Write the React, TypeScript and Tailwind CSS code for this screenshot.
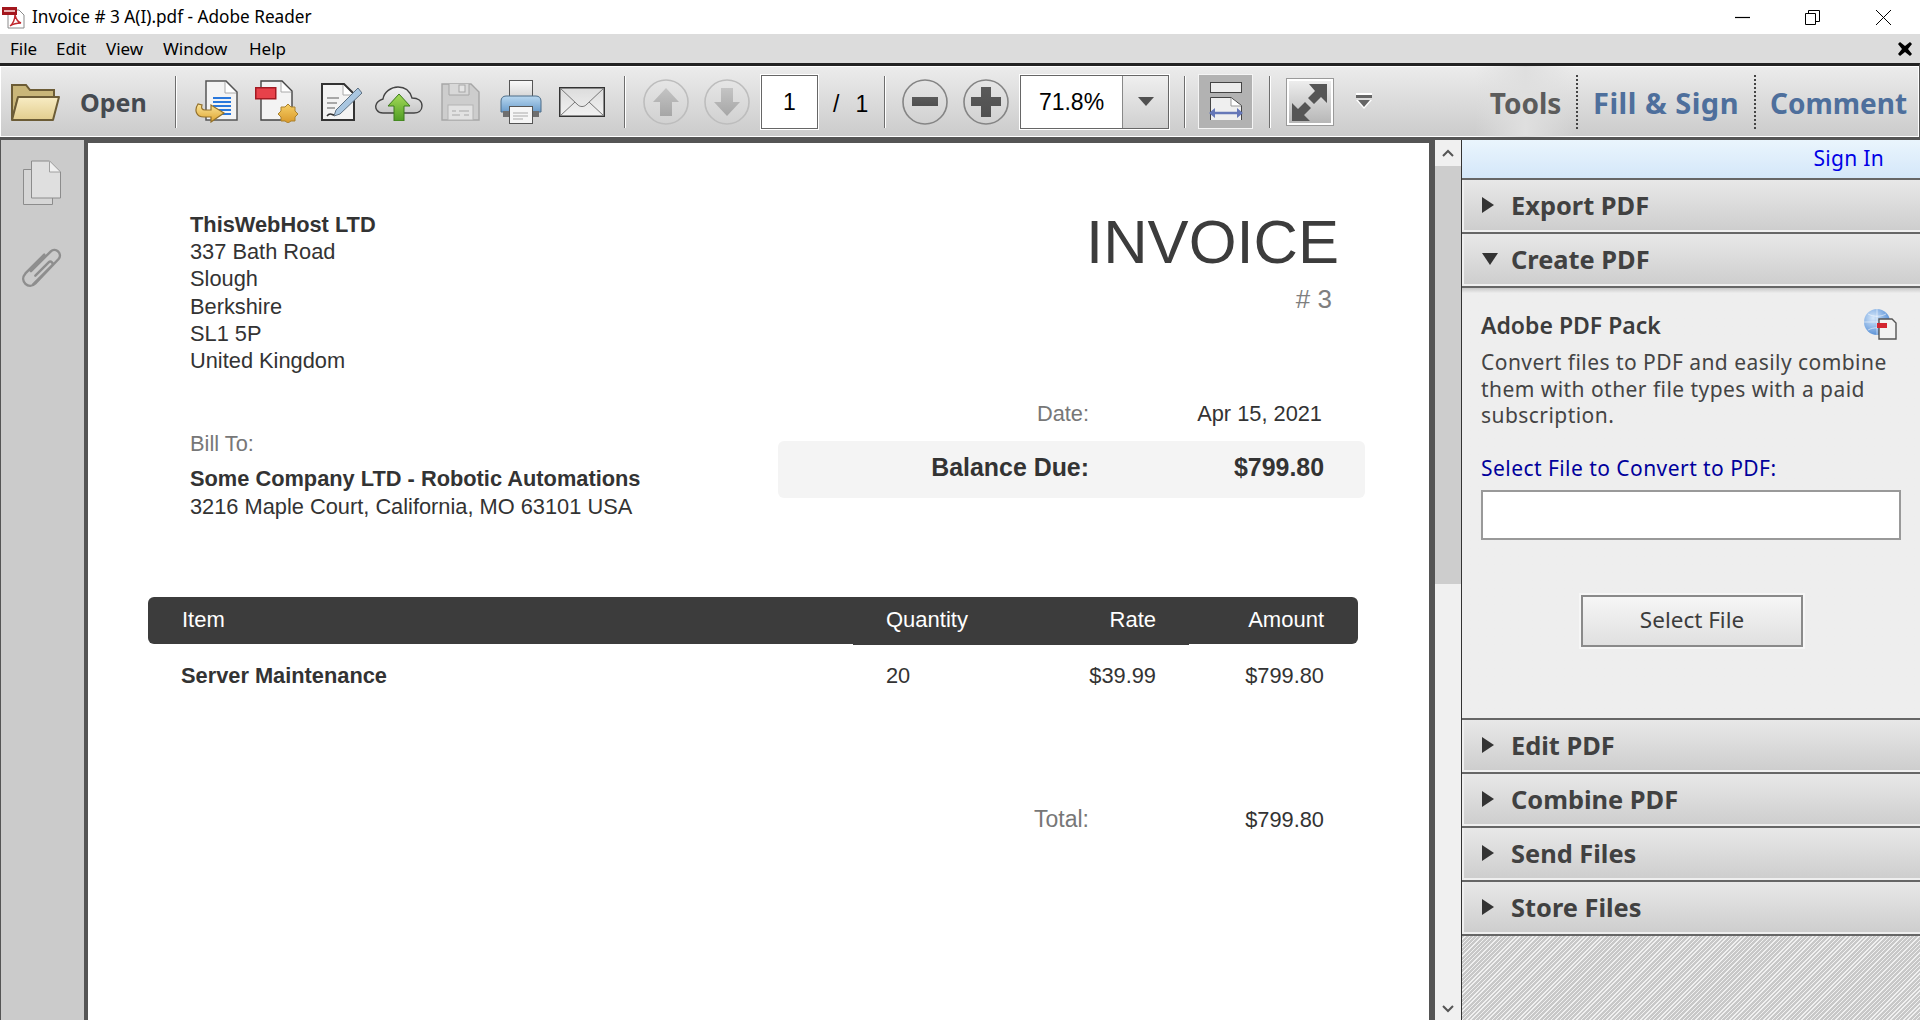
const sans = 'font-["Noto_Sans",sans-serif]'

function Sep() {
  return <div className="h-[52px] w-px shrink-0 bg-[#6e6e6e] shadow-[1px_0_0_#fff]" />
}

function PdfFileIcon() {
  return (
    <svg width="23" height="23" viewBox="0 0 23 23" className="ml-[2px] shrink-0">
      <path d="M6 4h11l5 5v13H6z" fill="#fff" stroke="#8a8a8a" />
      <path d="M8 20c3-2 5-7 5-11 1 4 3 7 6 8-4 0-8 1-11 3z" fill="none" stroke="#c0272d" strokeWidth="1.5" />
      <rect x="0" y="1" width="15" height="8" fill="#a3161d" />
      <rect x="2" y="4" width="11" height="2" fill="#e8b5b5" />
    </svg>
  )
}

function FolderIcon() {
  return (
    <svg width="50" height="40" viewBox="0 0 50 40" className="ml-[10px] shrink-0">
      <defs>
        <linearGradient id="fold" x1="0" y1="0" x2="0" y2="1">
          <stop offset="0" stopColor="#f8ecc4" />
          <stop offset="1" stopColor="#e2cd8e" />
        </linearGradient>
      </defs>
      <path d="M2 38V3h14l4 5h24v8H8z" fill="#c9b679" stroke="#6c5c36" strokeWidth="2" />
      <path d="M2 38l6-23h41l-6 23z" fill="url(#fold)" stroke="#6c5c36" strokeWidth="2" strokeLinejoin="round" />
    </svg>
  )
}

function ConvertIcon() {
  return (
    <svg width="44" height="43" viewBox="0 0 44 43" className="ml-[18px] shrink-0">
      <defs>
        <linearGradient id="arr" x1="0" y1="0" x2="0" y2="1">
          <stop offset="0" stopColor="#fbe59a" />
          <stop offset="1" stopColor="#dfa52f" />
        </linearGradient>
      </defs>
      <path d="M12 1h20l11 11v28H12z" fill="#f4f4f4" stroke="#555" strokeWidth="1.5" />
      <path d="M31 2v11h11" fill="#fff" stroke="#aaa" />
      <g fill="#2a78dc">
        <rect x="19" y="17" width="18" height="2" />
        <rect x="19" y="21" width="18" height="2" />
        <rect x="19" y="25" width="18" height="2" />
        <rect x="19" y="29" width="18" height="2" />
        <rect x="19" y="33" width="18" height="2" />
      </g>
      <path d="M4 24C0 30 2 37 10 37h7v5l13-9-13-8v5h-6c-3 0-4-2-3-5z" fill="url(#arr)" stroke="#93702a" strokeWidth="1.2" />
    </svg>
  )
}

function SealDocIcon() {
  return (
    <svg width="43" height="43" viewBox="0 0 43 43" className="ml-[17px] shrink-0">
      <defs>
        <linearGradient id="seal" x1="0" y1="0" x2="0" y2="1">
          <stop offset="0" stopColor="#f6cf66" />
          <stop offset="1" stopColor="#d9982a" />
        </linearGradient>
      </defs>
      <path d="M6 1h21l10 10v29H6z" fill="#f3f3f3" stroke="#444" strokeWidth="1.4" />
      <path d="M26 2v10h10" fill="#fff" stroke="#aaa" />
      <rect x="0.75" y="7.75" width="20" height="11" fill="#e8414a" stroke="#a31a22" strokeWidth="1.5" />
      <path d="M33 24l3 3h4v4l3 3-3 3v4h-4l-3 2-3-2h-4v-4l-3-3 3-3v-4h4z" fill="url(#seal)" stroke="#a9812f" />
    </svg>
  )
}

function EditDocIcon() {
  return (
    <svg width="42" height="40" viewBox="0 0 42 40" className="ml-[22px] shrink-0">
      <path d="M2 2h22l10 10v26H2z" fill="#f3f3f3" stroke="#333" strokeWidth="2" />
      <path d="M23 3v10h10" fill="#fff" stroke="#aaa" />
      <g stroke="#a8a8a8" strokeWidth="2">
        <path d="M7 16h12M7 21h10M7 26h8" />
      </g>
      <path d="M38 6l4 5-22 21-6 2 2-6z" fill="#a9c6e0" stroke="#5d6f80" />
      <path d="M7 34c3-4 5-1 7-1" fill="none" stroke="#333" strokeWidth="1.5" />
    </svg>
  )
}

function CloudIcon() {
  return (
    <svg width="48" height="38" viewBox="0 0 48 38" className="ml-[13px] shrink-0">
      <defs>
        <linearGradient id="cl" x1="0" y1="0" x2="0" y2="1">
          <stop offset="0" stopColor="#f0f0f0" />
          <stop offset="1" stopColor="#c8c8c8" />
        </linearGradient>
        <linearGradient id="gr" x1="0" y1="0" x2="0" y2="1">
          <stop offset="0" stopColor="#a5dc58" />
          <stop offset="1" stopColor="#4f9c24" />
        </linearGradient>
      </defs>
      <path d="M8 30C2 30 0 25 1 22c1-4 4-5 7-6 1-7 8-12 15-12 7 0 12 4 14 11 6 0 10 3 10 8s-4 7-8 7z" fill="url(#cl)" stroke="#444" strokeWidth="1.4" />
      <path d="M24 11l11 12h-6v15H19V23h-6z" fill="url(#gr)" stroke="#3c7a1c" />
    </svg>
  )
}

function SaveIcon() {
  return (
    <svg width="39" height="38" viewBox="0 0 39 38" className="ml-[18px] shrink-0">
      <path d="M1 1h29l8 8v28H1z" fill="#cdcdcd" stroke="#a6a6a6" strokeWidth="1.4" />
      <path d="M8 1v11h20V1" fill="#d8d8d8" stroke="#a6a6a6" />
      <rect x="18" y="2" width="6" height="7" fill="#e4e4e4" stroke="#a6a6a6" />
      <rect x="7" y="22" width="25" height="15" fill="#e2e2e2" stroke="#b4b4b4" />
      <path d="M11 28h4M18 28h10M11 32h8M23 32h5" stroke="#bcbcbc" strokeWidth="1.5" />
    </svg>
  )
}

function PrinterIcon() {
  return (
    <svg width="42" height="44" viewBox="0 0 42 44" className="ml-[20px] shrink-0">
      <defs>
        <linearGradient id="pr" x1="0" y1="0" x2="0" y2="1">
          <stop offset="0" stopColor="#b9d8f0" />
          <stop offset="1" stopColor="#6a9ccb" />
        </linearGradient>
        <linearGradient id="pa" x1="0" y1="0" x2="0" y2="1">
          <stop offset="0" stopColor="#fafafa" />
          <stop offset="1" stopColor="#d4d4d4" />
        </linearGradient>
      </defs>
      <rect x="9.5" y="0.5" width="23" height="17" fill="url(#pa)" stroke="#555" />
      <path d="M1 32V21c0-3 2-5 5-5h30c3 0 5 2 5 5v11z" fill="url(#pr)" stroke="#4d6d88" />
      <rect x="3" y="31" width="36" height="6" fill="#6f6f6f" />
      <rect x="9.5" y="26.5" width="23" height="17" fill="#f6f6f6" stroke="#555" />
      <path d="M13 33h15M13 36h15M13 39h10" stroke="#aaa" />
    </svg>
  )
}

function MailIcon() {
  return (
    <svg width="46" height="30" viewBox="0 0 46 30" className="ml-[17px] shrink-0">
      <defs>
        <linearGradient id="ml" x1="0" y1="0" x2="0" y2="1">
          <stop offset="0" stopColor="#dcdcdc" />
          <stop offset="1" stopColor="#f2f2f2" />
        </linearGradient>
      </defs>
      <rect x="0.75" y="0.75" width="44.5" height="28.5" fill="url(#ml)" stroke="#333" strokeWidth="1.5" />
      <path d="M1 1l18 17c2 2 6 2 8 0L45 1M1 29l15-14M45 29L30 15" fill="none" stroke="#777" />
    </svg>
  )
}

function RoundButton({ kind, disabled, className }: { kind: string; disabled?: boolean; className: string }) {
  const ring = disabled ? '#bdbdbd' : '#858585'
  const id = `rb-${kind}`
  return (
    <svg width="46" height="46" viewBox="0 0 46 46" className={`shrink-0 ${className}`}>
      <defs>
        <linearGradient id={id} x1="0" y1="0" x2="0" y2="1">
          <stop offset="0" stopColor={disabled ? '#c4c4c4' : '#5a5a5a'} />
          <stop offset="1" stopColor={disabled ? '#a6a6a6' : '#505050'} />
        </linearGradient>
      </defs>
      <circle cx="23" cy="23" r="22" fill="none" stroke={ring} strokeWidth="1.6" />
      {kind === 'up' && <path d="M23 9l13 14h-7v14H17V23h-7z" fill={`url(#${id})`} />}
      {kind === 'down' && <path d="M23 37L10 23h7V9h12v14h7z" fill={`url(#${id})`} />}
      {kind === 'minus' && <rect x="10" y="18" width="26" height="9" fill={`url(#${id})`} />}
      {kind === 'plus' && <path d="M18 8h10v10h10v9H28v11H18V27H8v-9h10z" fill={`url(#${id})`} />}
    </svg>
  )
}

function FitWidthButton() {
  return (
    <div className="ml-[13px] h-[55px] w-[55px] shrink-0 border border-[#f4f4f4] bg-[#b2b2b2]">
      <svg width="53" height="53" viewBox="0 0 53 53">
        <rect x="11.5" y="7.5" width="31" height="10" fill="#ececec" stroke="#444" />
        <path d="M11.5 45V22.5H32l10.5 8V45" fill="#efefef" stroke="#444" />
        <path d="M32 23v8h10" fill="#fff" stroke="#999" />
        <path d="M14 38h26" stroke="#6678b8" strokeWidth="2.5" />
        <path d="M10 38l6-5v10zM44 38l-6-5v10z" fill="#6678b8" />
      </svg>
    </div>
  )
}

function FullScreenButton() {
  return (
    <div className="ml-[16px] h-[48px] w-[48px] shrink-0 border border-[#9a9a9a] bg-gradient-to-b from-[#f0f0f0] to-[#b4b4b4] shadow-[inset_0_0_0_2px_#fff]">
      <svg width="46" height="46" viewBox="0 0 46 46">
        <path d="M40 5v19l-6-6-7 7-6-6 7-7-6-7zM5 42V24l6 6 7-7 6 6-7 7 6 6z" fill="#555" />
      </svg>
    </div>
  )
}

function MoreArrow() {
  return (
    <svg width="18" height="17" viewBox="0 0 18 17" className="ml-[21px] shrink-0">
      <rect x="1" y="0" width="16" height="2" fill="#fff" />
      <rect x="1" y="2" width="16" height="3" fill="#666" />
      <path d="M1 7h16l-8 9z" fill="#fff" />
      <path d="M3 7h12l-6 7z" fill="#666" />
    </svg>
  )
}

function Dots() {
  return <div className="h-[54px] w-[2px] shrink-0 border-l-2 border-dotted border-[#444]" />
}

function Toolbar() {
  return (
    <div className="flex h-[76px] shrink-0 items-center border-t-[3px] border-r border-b-2 border-t-[#222] border-r-[#555] border-b-[#555] bg-gradient-to-b from-[#ececec] to-[#cbcbcb] shadow-[inset_0_1px_0_#fff,inset_0_-1px_0_#fff,inset_1px_0_0_#fff,inset_-1px_0_0_#fff]">
      <FolderIcon />
      <div className={`ml-[20px] w-[95px] shrink-0 pt-[2px] text-[25px] font-bold leading-none text-[#454a50] ${sans}`}>Open</div>
      <Sep />
      <ConvertIcon />
      <SealDocIcon />
      <EditDocIcon />
      <CloudIcon />
      <SaveIcon />
      <PrinterIcon />
      <MailIcon />
      <div className="ml-[19px]"><Sep /></div>
      <RoundButton kind="up" disabled className="ml-[18px]" />
      <RoundButton kind="down" disabled className="ml-[15px]" />
      <div className={`ml-[11px] flex h-[54px] w-[57px] shrink-0 items-center justify-center border border-[#666] bg-white pt-[2px] text-[23px] text-black shadow-[0_0_0_1px_#fff] font-["Liberation_Sans",sans-serif]`}>
        1
      </div>
      <div className={`flex w-[66px] shrink-0 items-center gap-[16px] pl-[15px] pt-[5px] text-[23px] text-black font-["Liberation_Sans",sans-serif]`}>
        <span>/</span>
        <span>1</span>
      </div>
      <Sep />
      <RoundButton kind="minus" className="ml-[17px]" />
      <RoundButton kind="plus" className="ml-[15px]" />
      <div className={`ml-[11px] flex h-[54px] w-[149px] shrink-0 border border-[#666] bg-white shadow-[0_0_0_1px_#fff] font-["Liberation_Sans",sans-serif]`}>
        <div className="flex w-[101px] items-center justify-center pt-[2px] text-[23px] text-black">71.8%</div>
        <div className="flex flex-1 items-center justify-center border-l border-[#888] bg-gradient-to-b from-[#efefef] to-[#d0d0d0]">
          <svg width="18" height="11" viewBox="0 0 18 11">
            <path d="M1 1h16l-8 9z" fill="#505050" />
          </svg>
        </div>
      </div>
      <div className="ml-[15px]"><Sep /></div>
      <FitWidthButton />
      <div className="ml-[16px]"><Sep /></div>
      <FullScreenButton />
      <MoreArrow />
      <div className="ml-auto flex h-full items-center">
        <div className={`flex h-full w-[101px] items-center justify-center bg-gradient-to-r from-[#cfcfcf00] via-[#dfdfdf] to-[#cfcfcf00] pt-[3px] text-[28px] font-bold text-[#5c5c5c] ${sans}`}>
          Tools
        </div>
        <Dots />
        <div className={`w-[176px] pl-[15px] pt-[3px] text-[29px] font-bold tracking-[0.5px] text-[#4e6f9c] ${sans}`}>Fill &amp; Sign</div>
        <Dots />
        <div className={`w-[163px] pl-[14px] pt-[3px] text-[28px] font-bold text-[#4e6f9c] ${sans}`}>Comment</div>
      </div>
    </div>
  )
}

function LeftRail() {
  return (
    <div className="flex w-[84px] shrink-0 flex-col items-start border-l border-[#555] bg-[#cbcbcb] pl-[21px] pt-[20px]">
      <svg width="40" height="46" viewBox="0 0 40 46">
        <path d="M1.5 9.5h29v35h-29z" fill="#d6d6d6" stroke="#8c8c8c" />
        <path d="M9.5 1h18l11 11v26h-29z" fill="#dfdfdf" stroke="#8c8c8c" />
        <path d="M27.5 1.5v10.5h10.5" fill="#f0f0f0" stroke="#a0a0a0" />
      </svg>
      <svg width="42" height="46" viewBox="3 2 38 40" className="ml-[-1px] mt-[40px]">
        <path d="M12 24L30 6c4-4 11 2 7 7L16 35c-6 6-15-2-9-9L24 9M16 28l12-12c2-2 5 1 3 3L14 36" fill="none" stroke="#8e8e8e" strokeWidth="2.2" strokeLinecap="round" />
      </svg>
    </div>
  )
}

function Page() {
  return (
    <div className={`h-full bg-white text-[21.8px] text-[#333] font-["Liberation_Sans",Arial,sans-serif]`}>
      <div className="flex justify-between pl-[102px] pr-[64px] pt-[67px] leading-[27.2px]">
        <div className="pt-[1px]">
          <div className="font-bold">ThisWebHost LTD</div>
          <div>337 Bath Road</div>
          <div>Slough</div>
          <div>Berkshire</div>
          <div>SL1 5P</div>
          <div>United Kingdom</div>
          <div className="mt-[56px] text-[#777]">Bill To:</div>
          <div className="mt-[8px] font-bold">Some Company LTD - Robotic Automations</div>
          <div>3216 Maple Court, California, MO 63101 USA</div>
        </div>
        <div className="w-[587px]">
          <div className="pr-[26px] text-right text-[61.5px] leading-[64px] text-[#3c3c3c]">INVOICE</div>
          <div className="mt-[12px] pr-[33px] text-right text-[26px] leading-[27px] text-[#7f7f7f]">#&nbsp;3</div>
          <div className="mt-[87px] flex leading-[28px]">
            <div className="w-[311px] text-right text-[#777]">Date:</div>
            <div className="w-[233px] text-right">Apr 15, 2021</div>
          </div>
          <div className="mt-[13px] flex h-[57px] rounded-[6px] bg-[#f4f4f4] pt-[12px] text-[24.9px] font-bold leading-[28px]">
            <div className="w-[311px] text-right">Balance Due:</div>
            <div className="w-[235px] text-right">$799.80</div>
          </div>
        </div>
      </div>
      <div className="ml-[60px] mt-[77.2px] w-[1210px]">
        <div className="relative grid h-[47px] grid-cols-[738px_150px_120px_168px] items-center rounded-[6px] bg-[#3c3c3c] pb-[3px] text-[22px] text-white">
          <div className="pl-[34px]">Item</div>
          <div>Quantity</div>
          <div className="text-right">Rate</div>
          <div className="text-right">Amount</div>
          <div className="absolute bottom-[-1px] left-[705px] h-px w-[336px] bg-[#3c3c3c]" />
        </div>
        <div className="mt-[18px] grid grid-cols-[738px_150px_120px_168px] leading-[27px]">
          <div className="pl-[33px] font-bold">Server Maintenance</div>
          <div>20</div>
          <div className="text-right">$39.99</div>
          <div className="text-right">$799.80</div>
        </div>
        <div className="mt-[117px] flex leading-[27px]">
          <div className="w-[941px] text-right text-[23px] text-[#777]">Total:</div>
          <div className="w-[235px] text-right">$799.80</div>
        </div>
      </div>
    </div>
  )
}

function ScrollBar() {
  return (
    <div className="flex w-[26px] shrink-0 flex-col bg-[#f0f0f0]">
      <div className="flex h-[26px] items-center justify-center">
        <svg width="12" height="8" viewBox="0 0 12 8"><path d="M1 7l5-5 5 5" fill="none" stroke="#555" strokeWidth="2" /></svg>
      </div>
      <div className="h-[418px] bg-[#cdcdcd]" />
      <div className="flex flex-1 items-end justify-center pb-[7px]">
        <svg width="12" height="8" viewBox="0 0 12 8"><path d="M1 1l5 5 5-5" fill="none" stroke="#555" strokeWidth="2" /></svg>
      </div>
    </div>
  )
}

function Section({ title, open }: { title: string; open?: boolean }) {
  return (
    <div className="h-[54px] shrink-0 border-t-2 border-[#666]">
      <div className={`flex h-full items-center border-b-2 border-l-2 border-[#efefef] bg-gradient-to-b from-[#e8e8e8] to-[#cecece] pl-[18px] ${sans}`}>
        {open ? (
          <svg width="16" height="12" viewBox="0 0 16 12" className="shrink-0"><path d="M0 0h16l-8 12z" fill="#333" /></svg>
        ) : (
          <svg width="12" height="16" viewBox="0 0 12 16" className="shrink-0"><path d="M0 0l12 8-12 8z" fill="#333" /></svg>
        )}
        <span className={`text-[25.4px] font-bold text-[#414141] ${open ? 'ml-[13px]' : 'ml-[17px]'}`}>{title}</span>
      </div>
    </div>
  )
}

function PackIcon() {
  return (
    <svg width="33" height="31" viewBox="0 0 33 31" className="shrink-0">
      <defs>
        <radialGradient id="gl" cx="0.35" cy="0.35" r="0.8">
          <stop offset="0" stopColor="#d6e8fa" />
          <stop offset="1" stopColor="#3f7fd0" />
        </radialGradient>
      </defs>
      <circle cx="13" cy="13" r="13" fill="url(#gl)" />
      <path d="M0 13h26M13 0v26M4 5c6 3 12 3 18 0M4 21c6-3 12-3 18 0" fill="none" stroke="#ffffff88" />
      <path d="M15 10h13l4 4v16H15z" fill="#f2f2f2" stroke="#555" strokeWidth="1.4" />
      <rect x="13" y="14" width="10" height="5" fill="#d32630" />
    </svg>
  )
}

function CreatePanel() {
  return (
    <div className={`h-[430px] shrink-0 bg-[#eeeeee] bg-gradient-to-b from-[#c8c8c8] from-0% to-[#eeeeee] to-[1.2%] pl-[19px] pt-[21px] ${sans}`}>
      <div className="flex items-center justify-between pr-[24px]">
        <div className="text-[23px] font-semibold leading-[30px] text-[#3c3c3c]">Adobe PDF Pack</div>
        <PackIcon />
      </div>
      <div className="mt-[9px] text-[21px] leading-[26.5px] tracking-[0.45px] text-[#444]">
        Convert files to PDF and easily combine
        <br />
        them with other file types with a paid
        <br />
        subscription.
      </div>
      <div className="mt-[26px] text-[21px] leading-[26px] tracking-[0.45px] text-[#00009c]">Select File to Convert to PDF:</div>
      <div className="mt-[9px] h-[50px] w-[420px] border-2 border-[#999] bg-white" />
      <div className="ml-[100px] mt-[55px] flex h-[52px] w-[222px] items-center justify-center border-2 border-[#8a8a8a] bg-gradient-to-b from-[#f6f6f6] to-[#e0e0e0] pb-[2px] text-[22.5px] text-[#3c3c3c] shadow-[0_0_0_2px_#f6f6f6]">
        Select File
      </div>
    </div>
  )
}

function RightPanel() {
  return (
    <div className="flex w-[460px] shrink-0 flex-col border-l border-[#333]">
      <div className={`flex h-[38px] shrink-0 items-center justify-end bg-gradient-to-b from-[#eaf5fd] to-[#d4e7f9] pr-[37px] text-[21px] tracking-[0.3px] text-[#0000e6] ${sans}`}>
        Sign In
      </div>
      <Section title="Export PDF" />
      <Section title="Create PDF" open />
      <div className="border-t-2 border-[#666]" />
      <CreatePanel />
      <Section title="Edit PDF" />
      <Section title="Combine PDF" />
      <Section title="Send Files" />
      <Section title="Store Files" />
      <div className="flex-1 border-t-2 border-[#666] bg-[repeating-linear-gradient(135deg,#c8c8c8_0,#c8c8c8_2px,#f0f0f0_2px,#f0f0f0_3px)]" />
    </div>
  )
}

export default function App() {
  return (
    <div className="flex h-[1020px] w-[1920px] flex-col overflow-hidden bg-white">
      <div className={`flex h-[34px] shrink-0 items-center text-[17.2px] text-black ${sans}`}>
        <PdfFileIcon />
        <div className="ml-[7px]">Invoice # 3 A(I).pdf - Adobe Reader</div>
        <div className="ml-auto flex items-center">
          <svg width="15" height="15" viewBox="0 0 15 15"><path d="M0 7.5h15" stroke="#000" strokeWidth="1.2" /></svg>
          <svg width="15" height="15" viewBox="0 0 15 15" className="ml-[55px]">
            <path d="M.5 3.5h10v11H.5zM3.5 3.5v-3h11v11h-4" fill="none" stroke="#000" />
          </svg>
          <svg width="15" height="15" viewBox="0 0 15 15" className="ml-[56px] mr-[29px]">
            <path d="M0 0l15 15M15 0L0 15" stroke="#000" />
          </svg>
        </div>
      </div>
      <div className={`flex h-[29px] shrink-0 items-center bg-[#dcdcdc] pl-[10px] text-[17px] text-black ${sans}`}>
        <span className="w-[46px]">File</span>
        <span className="w-[50px]">Edit</span>
        <span className="w-[57px]">View</span>
        <span className="w-[86px]">Window</span>
        <span>Help</span>
        <svg width="14" height="14" viewBox="0 0 14 14" className="ml-auto mr-[8px]">
          <path d="M2 0l5 4 5-4 2 2-4 5 4 5-2 2-5-4-5 4-2-2 4-5-4-5z" fill="#000" />
        </svg>
      </div>
      <Toolbar />
      <div className="flex min-h-0 flex-1 border-t border-[#555]">
        <LeftRail />
        <div className="w-[1351px] shrink-0 bg-[#555] pl-[4px] pr-[6px] pt-[3px]">
          <Page />
        </div>
        <ScrollBar />
        <RightPanel />
      </div>
    </div>
  )
}
